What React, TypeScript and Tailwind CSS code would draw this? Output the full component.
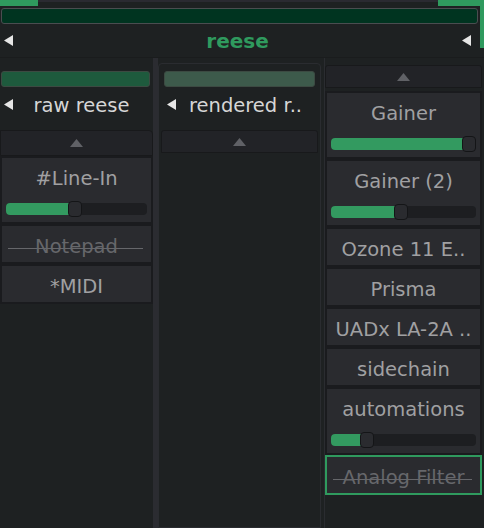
import React from 'react'

const FONT = { fontFamily: '"DejaVu Sans", "Liberation Sans", sans-serif' }

function LeftTri() {
  return (
    <svg width="9" height="11" viewBox="0 0 9 11" className="shrink-0">
      <path d="M9 0 L9 11 L0 5.5 Z" fill="#e6e6e6" />
    </svg>
  )
}

function UpButton({ className = '' }: { className?: string }) {
  return (
    <div className={`flex items-center justify-center bg-[#222327] border border-[#18191b] ${className}`}>
      <svg width="13" height="8" viewBox="0 0 13 8">
        <path d="M0 8 L6.5 0 L13 8 Z" fill="#606166" />
      </svg>
    </div>
  )
}

function Slider({ pct }: { pct: number }) {
  const left = `calc((100% - 14px) * ${pct / 100})`
  return (
    <div className="relative h-[16px] mx-[4px]">
      <div className="absolute inset-x-0 top-[2px] h-[12px] rounded-[4px] bg-[#1d1e21]" />
      <div
        className="absolute left-0 top-[2px] h-[12px] rounded-l-[4px] bg-[#339a60]"
        style={{ width: `calc((100% - 14px) * ${pct / 100} + 7px)` }}
      />
      <div
        className="absolute top-0 h-[16px] w-[14px] rounded-[4px] bg-[#2a2b2f] border border-[#141517]"
        style={{ left }}
      />
    </div>
  )
}

function Item({ label, slider, off, selected }: { label: string; slider?: number; off?: boolean; selected?: boolean }) {
  return (
    <div
      className={`flex flex-col bg-[#2a2b2f] border-2 ${selected ? 'border-[#2f9a5e]' : 'border-[#1a1b1e]'} ${
        slider !== undefined ? 'h-[68px] pt-[10px]' : 'h-[40px] pt-[5px] justify-center'
      }`}
    >
      <div className="relative flex justify-center">
        <span
          className={`text-[19.5px] leading-[22px] whitespace-nowrap ${off ? 'text-[#66676b]' : 'text-[#a0a0a2]'}`}
        >
          {label}
        </span>
        {off && <div className="absolute left-[6px] right-[8px] top-[12px] h-px bg-[#66676b]" />}
      </div>
      {slider !== undefined && (
        <div className="mt-[11px]">
          <Slider pct={slider} />
        </div>
      )}
    </div>
  )
}

function TrackHeader({ name, bar }: { name: string; bar: string }) {
  return (
    <div className="flex flex-col">
      <div className={`h-[16px] rounded-[3px] border border-[#3c4a42] ${bar}`} />
      <div className="flex items-center h-[34px] pl-[3px]">
        <LeftTri />
        <div className="flex-1 flex justify-center overflow-hidden pt-[3px]">
          <span className="text-[19.5px] text-[#d6d6d6] whitespace-nowrap">{name}</span>
        </div>
      </div>
    </div>
  )
}

export default function App() {
  return (
    <div className="w-[484px] h-[528px] bg-[#1e2122] overflow-hidden flex flex-col" style={FONT}>
      {/* header */}
      <div className="flex h-[58px] shrink-0 border-b border-[#1a1c1d]">
        <div className="flex-1 flex flex-col">
          <div className="flex h-[6px]">
            <div className="w-[38px] bg-[#2f9a5e]" />
            <div className="flex-1 h-[2px] bg-[#2a2a31]" />
            <div className="w-[42px] bg-[#2f9a5e]" />
          </div>
          <div className="mt-[2px] ml-[1px] mr-[2px] h-[16px] rounded-[3px] border border-[#4a4d50] bg-[#003420]" />
          <div className="flex items-center justify-between pl-[4px] pr-[9px] h-[34px]">
            <LeftTri />
            <span className="text-[20px] font-bold text-[#2f9a5e] pt-[2px]">reese</span>
            <LeftTri />
          </div>
        </div>
        <div className="w-[4px] h-[48px] bg-[#2f9a5e]" />
      </div>

      {/* columns */}
      <div className="flex flex-1 min-h-0">
        {/* left */}
        <div className="w-[153px] flex flex-col pt-[13px]">
          <div className="pl-[1px] pr-[3px]">
            <TrackHeader name="raw reese" bar="bg-[#1e5a3d]" />
          </div>
          <UpButton className="h-[26px] mt-[9px] rounded-tr-[4px]" />
          <Item label="#Line-In" slider={49} />
          <Item label="Notepad" off />
          <Item label="*MIDI" />
        </div>
        <div className="w-[5px] bg-[#2b2c31]" />

        {/* middle */}
        <div className="w-[163px] mt-[5px] rounded-t-[4px] border border-[#2a2c30] flex flex-col pt-[7px] px-[2px]">
          <div className="px-[3px]">
            <TrackHeader name="rendered r.." bar="bg-[#3d5a4b]" />
          </div>
          <UpButton className="h-[23px] mt-[9px] rounded-t-[3px]" />
        </div>
        <div className="w-[3px]" />

        {/* right */}
        <div className="flex-1 flex flex-col pt-[7px] pr-[2px] border-l border-[#2a2c30]">
          <UpButton className="h-[23px] rounded-t-[3px] mb-[3px]" />
          <Item label="Gainer" slider={100} />
          <Item label="Gainer (2)" slider={48} />
          <Item label="Ozone 11 E.." />
          <Item label="Prisma" />
          <Item label="UADx LA-2A .." />
          <Item label="sidechain" />
          <Item label="automations" slider={22} />
          <Item label="Analog Filter" off selected />
        </div>
      </div>
    </div>
  )
}
